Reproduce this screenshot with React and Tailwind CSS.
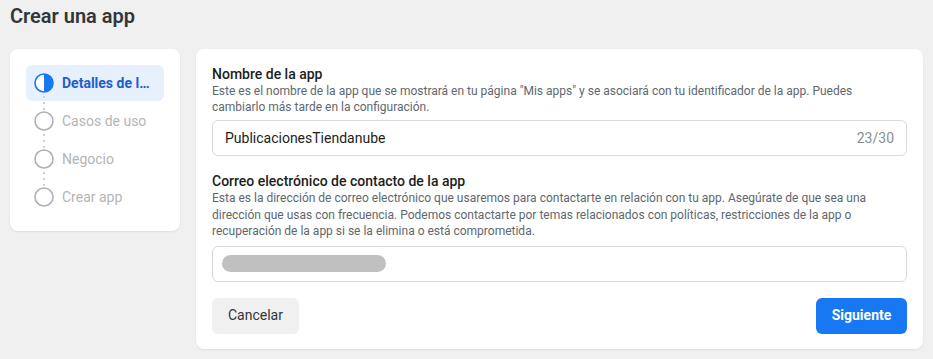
import React from "react";

const steps = [
    { label: "Detalles de la app", active: true },
    { label: "Casos de uso" },
    { label: "Negocio" },
    { label: "Crear app" },
];

function StepIcon({ active }) {
    if (active) {
        return (
            <svg width="20" height="20" viewBox="0 0 20 20" className="shrink-0">
                <circle cx="10" cy="10" r="9" fill="#fff" stroke="#1877f2" strokeWidth="1.6" />
                <path d="M10 1 A9 9 0 0 1 10 19 Z" fill="#1877f2" />
            </svg>
        );
    }
    return (
        <svg width="20" height="20" viewBox="0 0 20 20" className="shrink-0">
            <circle cx="10" cy="10" r="9" fill="#fff" stroke="#b0b0b0" strokeWidth="1.6" />
        </svg>
    );
}

export default function App() {
    return (
        <div
            className="w-[933px] h-[359px] bg-[#f0f0f0] text-[#1c1e21] overflow-hidden"
            style={{ fontFamily: "Roboto, 'Liberation Sans', sans-serif" }}
        >
            <h1 className="pl-[10px] pt-[4px] text-[20px] leading-[24px] font-semibold text-[#333639]">
                Crear una app
            </h1>

            <div className="flex items-start gap-4 px-[10px] mt-[21px]">
                <div className="w-[170px] shrink-0 bg-white rounded-lg shadow-[0_1px_2px_rgba(0,0,0,0.08)] p-4 flex flex-col gap-[2px]">
                    {steps.map((s, i) => (
                        <div
                            key={s.label}
                            className={
                                "relative h-9 flex items-center gap-2 pl-2 pr-2 rounded-md " +
                                (s.active ? "bg-[#e7f0fd]" : "")
                            }
                        >
                            <StepIcon active={s.active} />
                            <span
                                className={
                                    "text-[14px] truncate " +
                                    (s.active
                                        ? "font-bold text-[#1d5fcc]"
                                        : "text-[#b5b5b5]")
                                }
                            >
                                {s.label}
                            </span>
                            {i < steps.length - 1 && (
                                <div className="absolute left-[17px] top-[31px] flex flex-col gap-[4px]">
                                    <span className="w-[2px] h-[2px] bg-[#d0d0d0]" />
                                    <span className="w-[2px] h-[2px] bg-[#d0d0d0]" />
                                    <span className="w-[2px] h-[2px] bg-[#d0d0d0]" />
                                </div>
                            )}
                        </div>
                    ))}
                </div>

                <div className="flex-1 bg-white rounded-lg shadow-[0_1px_2px_rgba(0,0,0,0.08)] px-4 pt-4 pb-[15px]">
                    <div className="text-[14px] leading-[18px] font-medium text-[#1c1e21]">
                        Nombre de la app
                    </div>
                    <p className="text-[12px] leading-[16px] text-[#606770]">
                        Este es el nombre de la app que se mostrará en tu página "Mis apps" y se asociará con tu identificador de la app. Puedes cambiarlo más tarde en la configuración.
                    </p>
                    <div className="mt-[5px] h-9 border border-[#d8dadf] rounded-md flex items-center justify-between px-3">
                        <span className="text-[14px] text-[#1c1e21]">PublicacionesTiendanube</span>
                        <span className="text-[14px] text-[#8a8d91]">23/30</span>
                    </div>

                    <div className="mt-4 text-[14px] leading-[18px] font-medium text-[#1c1e21]">
                        Correo electrónico de contacto de la app
                    </div>
                    <p className="text-[12px] leading-[16.5px] text-[#606770]">
                        Esta es la dirección de correo electrónico que usaremos para contactarte en relación con tu app. Asegúrate de que sea una dirección que usas con frecuencia. Podemos contactarte por temas relacionados con políticas, restricciones de la app o recuperación de la app si se la elimina o está comprometida.
                    </p>
                    <div className="mt-[6px] h-9 border border-[#d8dadf] rounded-md flex items-center px-[9px]">
                        <div className="w-[164px] h-[17px] rounded-full bg-[#c0c0c0]" />
                    </div>

                    <div className="mt-4 flex justify-between">
                        <button className="h-9 w-[87px] rounded-md bg-[#f0f0f0] text-[14px] text-[#333639]">
                            Cancelar
                        </button>
                        <button className="h-9 w-[91px] rounded-md bg-[#1877f2] text-[14px] font-bold text-white">
                            Siguiente
                        </button>
                    </div>
                </div>
            </div>
        </div>
    );
}
